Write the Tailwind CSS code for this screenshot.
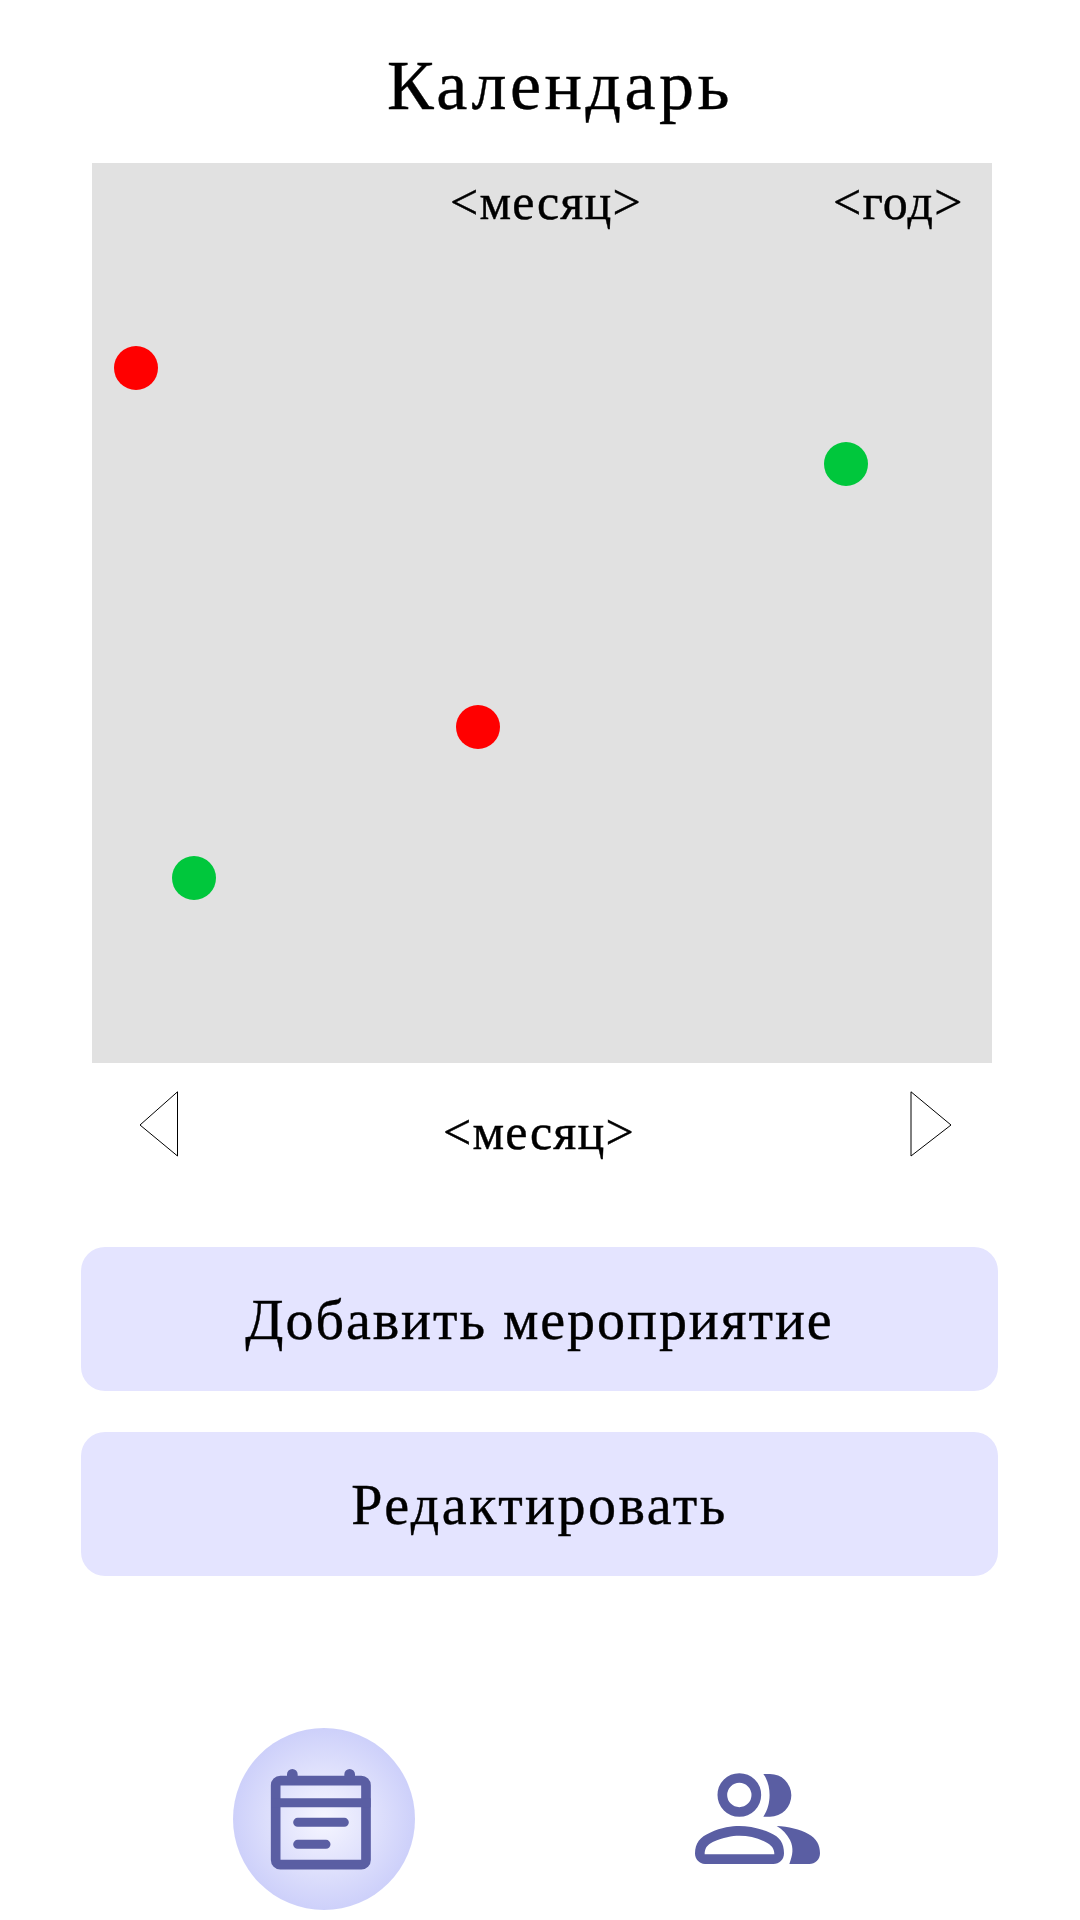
<!DOCTYPE html>
<html lang="ru">
<head>
    <meta charset="UTF-8">
    <title>Календарь</title>
    <script src="https://cdn.jsdelivr.net/npm/@tailwindcss/browser@4"></script>
</head>
<body class="bg-white text-black font-['Liberation_Serif',serif] [-webkit-text-stroke:0.4px_black]">
    <div class="w-[1080px] h-[1920px] overflow-hidden flex flex-col">
        <h1 class="h-[163px] pl-[387px] pt-[38px] text-[70px] leading-[96px] tracking-[3.5px]">Календарь</h1>

        <!-- calendar area -->
        <div class="relative ml-[92px] w-[900px] h-[900px] bg-[#e1e1e1]">
            <div class="flex pl-[358px] pt-[9px] text-[50px] leading-[60px] tracking-[1.2px]">
                <span class="w-[383px]">&lt;месяц&gt;</span>
                <span>&lt;год&gt;</span>
            </div>
            <div class="absolute left-[22px] top-[183px] w-11 h-11 rounded-full bg-[#ff0000]"></div>
            <div class="absolute left-[732px] top-[279px] w-11 h-11 rounded-full bg-[#00c73c]"></div>
            <div class="absolute left-[364px] top-[542px] w-11 h-11 rounded-full bg-[#ff0000]"></div>
            <div class="absolute left-[80px] top-[693px] w-11 h-11 rounded-full bg-[#00c73c]"></div>
        </div>

        <!-- month switcher -->
        <div class="h-[184px] pl-[139px] pt-[28px] flex items-start">
            <svg class="w-[40px] h-[66px]" viewBox="0 0 40 66"><polygon points="38.5,0.8 38.5,65 1,34" fill="none" stroke="#000" stroke-width="1"/></svg>
            <span class="w-[731px] pl-[264px] pt-[11px] text-[50px] leading-[60px] tracking-[1.2px]">&lt;месяц&gt;</span>
            <svg class="w-[42px] h-[66px]" viewBox="0 0 42 66"><polygon points="1,0.8 1,65 41,34" fill="none" stroke="#000" stroke-width="1"/></svg>
        </div>

        <div class="ml-[81px] w-[917px] flex flex-col gap-[41px]">
            <button class="h-[144px] pt-[2px] rounded-[24px] bg-[#e4e4ff] text-[56px] tracking-[1.95px]">Добавить мероприятие</button>
            <button class="h-[144px] pt-[2px] rounded-[24px] bg-[#e4e4ff] text-[56px] tracking-[2.5px]">Редактировать</button>
        </div>

        <!-- bottom nav -->
        <div class="mt-[152px] flex items-start">
            <div class="ml-[233px] w-[182px] h-[182px] rounded-full bg-[radial-gradient(closest-side,#f6f6ff_0%,#cdd0fa_100%)] flex items-center justify-center">
                <svg class="w-[110px] h-[110px]" viewBox="0 0 330 330">
                    <g fill="none" stroke="#5a5ea3" stroke-linecap="round">
                        <rect x="20" y="50" width="271" height="252" rx="14" stroke-width="29"/>
                        <path d="M6 116H305" stroke-width="27" stroke-linecap="butt"/>
                        <path d="M70 31V46M242 31V46" stroke-width="32"/>
                        <path d="M86 175H226M86 241H171" stroke-width="27"/>
                    </g>
                </svg>
            </div>
            <svg class="ml-[245px] mt-[12px] w-[200px] h-[160px]" viewBox="0 0 600 480" fill="#5a5ea3">
                <circle cx="238" cy="165" r="51" fill="none" stroke="#5a5ea3" stroke-width="29"/>
                <path d="M310 102H330A64 64 0 0 1 330 230H310C335 195 335 135 310 102Z"/>
                <path fill-rule="evenodd" d="M105 340C105 310 120 290 150 278C185 262 215 258 238 258C265 258 300 265 330 278C360 290 372 310 372 340C372 360 358 372 340 372H135C118 372 105 358 105 340ZM134 343H343C343 325 335 315 315 305C290 292 265 287 238 287C215 287 190 292 160 305C140 315 134 325 134 343Z"/>
                <path d="M350 258C385 260 420 268 445 282C470 296 480 315 480 340C480 360 465 372 448 372H388C398 345 402 325 390 300C380 282 368 268 350 258Z"/>
            </svg>
        </div>
    </div>
</body>
</html>
